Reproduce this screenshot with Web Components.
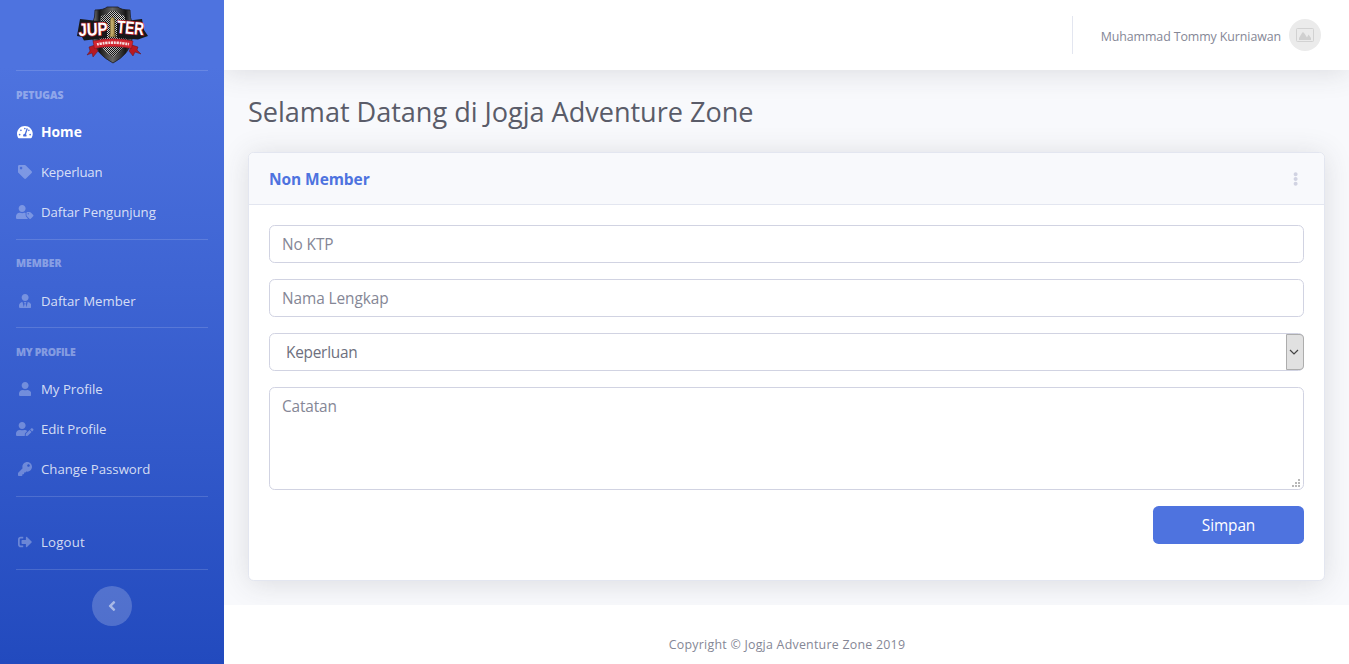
<!DOCTYPE html>
<html lang="id">
<head>
<meta charset="utf-8">
<title>Jogja Adventure Zone</title>
<style>
html,body{margin:0;height:100%}
body{font-family:"Open Sans","Noto Sans",sans-serif;color:#858796;font-size:15.4px;line-height:1.5;overflow:hidden}
</style>
</head>
<body>
<app-shell>
  <side-bar slot="side">
    <brand-logo></brand-logo>
    <nav-group heading="Petugas">
      <nav-item icon="gauge" active>Home</nav-item>
      <nav-item icon="tag" style="letter-spacing:-.2px">Keperluan</nav-item>
      <nav-item icon="usertag" style="letter-spacing:-.05px">Daftar Pengunjung</nav-item>
    </nav-group>
    <nav-group heading="Member">
      <nav-item icon="usertie">Daftar Member</nav-item>
    </nav-group>
    <nav-group heading="My Profile" style="--track:-.3px">
      <nav-item icon="user">My Profile</nav-item>
      <nav-item icon="useredit" style="letter-spacing:-.1px">Edit Profile</nav-item>
      <nav-item icon="key">Change Password</nav-item>
    </nav-group>
    <nav-group>
      <nav-item icon="signout" style="letter-spacing:.2px">Logout</nav-item>
    </nav-group>
    <side-toggle></side-toggle>
  </side-bar>
  <top-bar slot="top">Muhammad Tommy Kurniawan</top-bar>
  <page-title>Selamat Datang di Jogja Adventure Zone</page-title>
  <form-card>
    <span slot="title">Non Member</span>
    <text-field label="No KTP"></text-field>
    <text-field label="Nama Lengkap"></text-field>
    <select-field label="Keperluan"></select-field>
    <area-field label="Catatan"></area-field>
    <submit-button>Simpan</submit-button>
  </form-card>
  <page-footer slot="foot">Copyright © Jogja Adventure Zone 2019</page-footer>
</app-shell>
<script>
const define = (name, html) => customElements.define(name, class extends HTMLElement {
  constructor() {
    super();
    const markup = typeof html === 'function' ? html(this) : html;
    this.attachShadow({mode: 'open'}).innerHTML = '<style>*{box-sizing:border-box}:host{box-sizing:border-box}</style>' + markup;
  }
});

// [viewBox width, path]; every glyph is 512 units high
const icons = {
  gauge: [576, 'M288 32C128.94 32 0 160.94 0 320c0 52.8 14.25 102.26 39.06 144.8 5.61 9.62 16.3 15.2 27.44 15.2h443c11.14 0 21.83-5.58 27.44-15.2C561.75 422.26 576 372.8 576 320c0-159.06-128.94-288-288-288zm0 64c14.71 0 26.58 10.13 30.32 23.65-1.11 2.26-2.64 4.23-3.45 6.67l-9.22 27.67c-5.13 3.49-10.97 6.01-17.64 6.01-17.67 0-32-14.33-32-32S270.33 96 288 96zM96 384c-17.67 0-32-14.33-32-32s14.33-32 32-32 32 14.33 32 32-14.33 32-32 32zm48-160c-17.67 0-32-14.33-32-32s14.33-32 32-32 32 14.33 32 32-14.33 32-32 32zm246.77-72.41l-61.33 184C343.13 347.33 352 364.54 352 384c0 11.72-3.38 22.55-8.88 32H232.88c-5.5-9.45-8.88-20.28-8.88-32 0-33.94 26.5-61.43 59.9-63.59l61.34-184.01c4.17-12.56 17.73-19.45 30.36-15.17 12.57 4.19 19.35 17.79 15.17 30.36zm14.66 57.2l15.52-46.55c3.47-1.29 7.13-2.23 11.05-2.23 17.67 0 32 14.33 32 32s-14.33 32-32 32c-11.38-.01-20.89-6.28-26.57-15.22zM480 384c-17.67 0-32-14.33-32-32s14.33-32 32-32 32 14.33 32 32-14.33 32-32 32z'],
  tag: [512, 'M0 252.118V48C0 21.49 21.49 0 48 0h204.118a48 48 0 0 1 33.941 14.059l211.882 211.882c18.745 18.745 18.745 49.137 0 67.882L293.823 497.941c-18.745 18.745-49.137 18.745-67.882 0L14.059 286.059A48 48 0 0 1 0 252.118zM112 64c-26.51 0-48 21.49-48 48s21.49 48 48 48 48-21.49 48-48-21.49-48-48-48z'],
  usertag: [640, 'M630.6 364.9l-90.3-90.2c-12-12-28.3-18.7-45.3-18.7h-79.3c-17.7 0-32 14.3-32 32v79.2c0 17 6.7 33.2 18.7 45.2l90.3 90.2c12.5 12.5 32.8 12.5 45.3 0l92.5-92.5c12.6-12.5 12.6-32.7.1-45.2zm-182.8-21c-13.3 0-24-10.7-24-24s10.7-24 24-24 24 10.7 24 24c0 13.2-10.7 24-24 24zm-223.8-88c70.7 0 128-57.3 128-128C352 57.3 294.7 0 224 0S96 57.3 96 128c0 70.6 57.3 127.9 128 127.9zm127.8 111.2V294c-12.2-3.6-24.9-6.2-38.2-6.2h-16.7c-22.2 10.2-46.9 16-72.9 16s-50.6-5.8-72.9-16h-16.7C60.2 287.9 0 348.1 0 422.3v41.6c0 26.5 21.5 48 48 48h352c15.5 0 29.1-7.5 37.9-18.9l-58-58c-18.1-18.1-28.1-42.2-28.1-67.9z'],
  usertie: [448, 'M224 256c70.7 0 128-57.3 128-128S294.7 0 224 0 96 57.3 96 128s57.3 128 128 128zm95.8 32.6L272 480l-32-136 32-56h-96l32 56-32 136-47.8-191.4C56.9 292 0 350.3 0 422.4V464c0 26.5 21.5 48 48 48h352c26.5 0 48-21.5 48-48v-41.6c0-72.1-56.9-130.4-128.2-133.8z'],
  user: [448, 'M224 256c70.7 0 128-57.3 128-128S294.7 0 224 0 96 57.3 96 128s57.3 128 128 128zm89.6 32h-16.7c-22.2 10.2-46.9 16-72.9 16s-50.6-5.8-72.9-16h-16.7C60.2 288 0 348.2 0 422.4V464c0 26.5 21.5 48 48 48h352c26.5 0 48-21.5 48-48v-41.6c0-74.2-60.2-134.4-134.4-134.4z'],
  useredit: [640, 'M224 256c70.7 0 128-57.3 128-128S294.7 0 224 0 96 57.3 96 128s57.3 128 128 128zm89.6 32h-16.7c-22.2 10.2-46.9 16-72.9 16s-50.6-5.8-72.9-16h-16.7C60.2 288 0 348.2 0 422.4V464c0 26.5 21.5 48 48 48h274.9c-2.4-6.8-3.4-14-2.6-21.3l6.8-60.9 1.2-11.1 7.9-7.9 77.3-77.3c-24.5-27.7-60-45.5-99.9-45.5zm45.3 145.3l-6.8 61c-1.1 10.2 7.5 18.8 17.6 17.6l60.9-6.8 137.9-137.9-71.7-71.7-137.9 137.8zM633 268.9L595.1 231c-9.3-9.3-24.5-9.3-33.8 0l-37.8 37.8-4.1 4.1 71.8 71.7 41.8-41.8c9.3-9.4 9.3-24.5 0-33.9z'],
  key: [512, 'M512 176.001C512 273.203 433.202 352 336 352c-11.22 0-22.19-1.062-32.827-3.069l-24.012 27.014A23.999 23.999 0 0 1 261.223 384H224v40c0 13.255-10.745 24-24 24h-40v40c0 13.255-10.745 24-24 24H24c-13.255 0-24-10.745-24-24v-78.059c0-6.365 2.529-12.47 7.029-16.971l161.802-161.802C163.108 213.814 160 195.271 160 176 160 78.798 238.797.001 335.999 0 433.488-.001 512 78.511 512 176.001zM336 128c0 26.51 21.49 48 48 48s48-21.49 48-48-21.49-48-48-48-48 21.49-48 48z'],
  signout: [512, 'M497 273L329 441c-15 15-41 4.5-41-17v-96H152c-13.3 0-24-10.7-24-24v-96c0-13.3 10.7-24 24-24h136V88c0-21.4 25.9-32 41-17l168 168c9.3 9.4 9.3 24.6 0 34zM192 436v-40c0-6.6-5.4-12-12-12H96c-17.7 0-32-14.3-32-32V160c0-17.7 14.3-32 32-32h84c6.6 0 12-5.4 12-12V76c0-6.6-5.4-12-12-12H96c-53 0-96 43-96 96v192c0 53 43 96 96 96h84c6.6 0 12-5.4 12-12z'],
  left: [256, 'M31.7 239l136-136c9.4-9.4 24.6-9.4 33.9 0l22.6 22.6c9.4 9.4 9.4 24.6 0 33.9L127.9 256l96.4 96.4c9.4 9.4 9.4 24.6 0 33.9L201.7 409c-9.4 9.4-24.6 9.4-33.9 0l-136-136c-9.5-9.4-9.5-24.6-.1-34z'],
  dots: [192, 'M96 184c39.8 0 72 32.2 72 72s-32.2 72-72 72-72-32.2-72-72 32.2-72 72-72zM24 80c0 39.8 32.2 72 72 72s72-32.2 72-72S135.800 8 96 8 24 40.200 24 80zm0 352c0 39.800 32.200 72 72 72s72-32.200 72-72-32.200-72-72-72-72 32.200-72 72z']
};
const icon = (n, h) => `<svg viewBox="0 0 ${icons[n][0]} 512" width="${h * icons[n][0] / 512}" height="${h}" fill="currentColor"><path d="${icons[n][1]}"/></svg>`;

define('app-shell', `<style>
:host{display:flex;height:100%}
.main{flex:1;display:flex;flex-direction:column;background:#f8f9fc;min-width:0}
.body{flex:none;height:535px;padding:24px 24px 0;display:flex;flex-direction:column}
</style><slot name="side"></slot><div class="main"><slot name="top"></slot><div class="body"><slot></slot></div><slot name="foot"></slot></div>`);

define('side-bar', `<style>
:host{display:flex;flex-direction:column;width:224px;flex:none;position:relative;z-index:2;background:linear-gradient(180deg,#4e73df 10%,#224abe 100%)}
</style><slot></slot>`);

define('brand-logo', `<style>
:host{display:flex;justify-content:center;height:70px;padding-top:5px}
</style><svg width="90" height="60" viewBox="-8 0 90 60">
<defs>
<linearGradient id="rim" x1="0" x2="1"><stop offset="0" stop-color="#888"/><stop offset=".16" stop-color="#161616"/><stop offset=".5" stop-color="#666"/><stop offset=".84" stop-color="#161616"/><stop offset="1" stop-color="#666"/></linearGradient>
<linearGradient id="core" x1="0" x2="1" y1="0" y2="1"><stop offset="0" stop-color="#999"/><stop offset=".45" stop-color="#ddd"/><stop offset=".75" stop-color="#aaa"/><stop offset="1" stop-color="#333"/></linearGradient>
<linearGradient id="brass" x1="0" x2="1"><stop offset="0" stop-color="#6d5a2c"/><stop offset=".4" stop-color="#c7ad68"/><stop offset="1" stop-color="#54441f"/></linearGradient>
<pattern id="mesh" width="2" height="2" patternUnits="userSpaceOnUse"><path d="M0 0h1v1H0zM1 1h1v1H1z" fill="#111"/></pattern>
</defs>
<path d="M20 5Q29 5 32 2H43Q46 5 55 5Q55 14 57 17V34Q55 49 38 58Q21 49 18 35V17Q20 13 20 5Z" fill="url(#rim)" stroke="#1b1b22" stroke-width=".8"/>
<path d="M26 11Q32 10 35 6H41Q44 10 50 11Q49 16 52 19V34Q50 45 38 52Q26 45 24 34V19Q26 15 26 11Z" fill="url(#core)"/>
<path d="M26 11Q32 10 35 6H41Q44 10 50 11Q49 16 52 19V34Q50 45 38 52Q26 45 24 34V19Q26 15 26 11Z" fill="url(#mesh)"/>
<path d="M5 14L32 17V33L9 35.500L7 32L2 31Z" fill="#171719"/>
<path d="M42 17L67 14L69 25L73 31L63 34.500L42 33Z" fill="#171719"/>
<path d="M35 29V15Q35.500 12 37.500 12Q39.800 12 40 15V29L41.500 32H33.500Z" fill="url(#brass)" stroke="#30301e" stroke-width=".5"/>
<g font-family="Liberation Sans,sans-serif" font-weight="700" fill="#fff" stroke="#b3202c" stroke-width="1.400" paint-order="stroke">
<text font-size="18" x="3.500" y="30.500" textLength="29" lengthAdjust="spacingAndGlyphs" transform="rotate(-2 18 24)">JUP</text>
<text font-size="18" x="36" y="29" textLength="3.500" lengthAdjust="spacingAndGlyphs" fill="#c9b678" stroke="none" opacity=".5">I</text>
<text font-size="18" x="42" y="29" textLength="27" lengthAdjust="spacingAndGlyphs" transform="rotate(5 55 24)">TER</text></g>
<path d="M14 42L20 40L23 46L18 52L17 48L12 50L15 46ZM63 42L57 40L54 46L58 51L60 47L66 49L62 45Z" fill="#b71923" stroke="#5e1420" stroke-width=".5"/>
<path d="M18 36Q38 31.500 58 36L56.500 43.500Q38 39.500 19.500 43.500Z" fill="#d22630" stroke="#7e101d" stroke-width=".5"/>
<path d="M22 39.300Q38 36 54 39.300" fill="none" stroke="#f6dcdc" stroke-width="2.600" stroke-dasharray="1.800 .7 2.400 .8"/>
</svg>`);

define('nav-group', el => `<style>
:host{display:flex;flex-direction:column}
hr{width:192px;height:1px;border:0;margin:0 16px;background:rgba(255,255,255,.15)}
.h{height:41px;padding:${el.getAttribute('heading') === 'Member' ? 15 : 16}px 16px 0;font-size:10.4px;font-weight:800;line-height:16px;color:rgba(255,255,255,.4);text-transform:uppercase;letter-spacing:var(--track,0)}
.list{display:flex;flex-direction:column;padding-bottom:${el.getAttribute('heading') === 'Member' ? 6 : 7}px}
.gap{height:25px}
</style><hr>${el.hasAttribute('heading') ? `<div class="h">${el.getAttribute('heading')}</div>` : '<div class="gap"></div>'}<div class="list"><slot></slot></div>`);

define('nav-item', el => `<style>
:host{display:flex;align-items:center;gap:7px;height:40px;padding-left:16px;font-size:13.2px;line-height:20px;color:rgba(255,255,255,.8)}
:host([active]){font-weight:700;color:#fff;font-size:13.8px}
i{display:flex;justify-content:center;width:18px;color:rgba(255,255,255,.3)}
:host([active]) i{color:#fff}
svg{display:block;flex:none}
</style><i>${icon(el.getAttribute('icon'), 14)}</i><span><slot></slot></span>`);

define('side-toggle', `<style>
:host{display:flex;flex-direction:column;align-items:center}
hr{width:192px;height:1px;border:0;margin:0 0 16px;background:rgba(255,255,255,.15)}
button{width:40px;height:40px;border:0;border-radius:50%;background:rgba(255,255,255,.2);color:rgba(255,255,255,.5);display:flex;align-items:center;justify-content:center;padding:0 1px 0 0}
</style><hr><button aria-label="Toggle">${icon('left', 16)}</button>`);

define('top-bar', `<style>
:host{display:flex;align-items:center;justify-content:flex-end;flex:none;height:70px;padding-right:28px;background:#fff;box-shadow:0 2.4px 28px rgba(58,59,69,.15);position:relative;z-index:1}
.rule{width:1px;height:38px;background:#e3e6f0;margin-right:28px}
.name{font-size:12.4px;letter-spacing:-.09px;margin:4px 8px 0 0}
svg{display:block}
</style><div class="rule"></div><span class="name"><slot></slot></span>
<svg width="32" height="32" viewBox="0 0 32 32"><circle cx="16" cy="16" r="16" fill="#ebebeb"/><rect x="7.500" y="9.500" width="17" height="13" rx="1" fill="none" stroke="#d2d2d2"/><path d="M10 21V19L13 14L14 13L15.500 14.500L18 18.500L19.500 15.500L22 19V21Z" fill="#d0d0d0"/></svg>`);

define('page-title', `<style>
:host{display:block}
h1{margin:0 0 23px;padding-top:1px;font-weight:400;font-size:27.1px;letter-spacing:-.03px;line-height:34px;color:#5a5c69}
</style><h1><slot></slot></h1>`);

define('form-card', `<style>
:host{display:flex;flex-direction:column;height:429px;background:#fff;border:1px solid #e3e6f0;border-radius:5.6px;box-shadow:0 2.4px 28px rgba(58,59,69,.15)}
header{display:flex;align-items:center;justify-content:space-between;height:52px;padding:0 26px 0 20px;background:#f8f9fc;border-bottom:1px solid #e3e6f0;border-radius:5px 5px 0 0;flex:none;color:#4e73df;font-weight:700;font-size:15.5px;letter-spacing:-.08px}
header div{padding-top:2px}
header svg{color:#d1d3e2}
.body{display:flex;flex-direction:column;gap:16px;padding:20px}
</style><header><div><slot name="title"></slot></div>${icon('dots', 14)}</header><div class="body"><slot></slot></div>`);

const box = `:host{display:flex}
.c{flex:1;width:100%;height:38px;padding:1px 12px 0;border:1px solid #d1d3e2;border-radius:5.6px;background:#fff;font:inherit;letter-spacing:-.08px;color:#6e707e;outline:0;margin:0}
.c::placeholder{color:#858796;opacity:1}`;

define('text-field', el => `<style>${box}</style><input class="c" placeholder="${el.getAttribute('label')}">`);

define('select-field', el => `<style>${box}
:host{position:relative}
.c{appearance:none;padding-left:16px;letter-spacing:-.25px}
.arrow{position:absolute;right:0;top:0;width:18px;height:38px;pointer-events:none}
</style><select class="c"><option>${el.getAttribute('label')}</option></select>
<svg class="arrow" viewBox="0 0 18 38"><path d="M.5 1.500H14Q17.500 1.500 17.500 5V33Q17.500 36.500 14 36.500H.5Z" fill="#e1e1e1" stroke="#adadad"/><path d="M4 17L8 21L12 17" fill="none" stroke="#444" stroke-width="1.200"/></svg>`);

define('area-field', el => `<style>${box}
:host{position:relative}
.c{height:103px;padding-top:7px;resize:none;letter-spacing:-.15px}
.grip{position:absolute;right:4px;bottom:3px;width:8px;height:8px}
</style><textarea class="c" placeholder="${el.getAttribute('label')}"></textarea>
<svg class="grip" viewBox="0 0 8 8" fill="#b8b8b8"><path d="M6 0h2v2H6zM3 3h2v2H3zM6 3h2v2H6zM0 6h2v2H0zM3 6h2v2H3zM6 6h2v2H6z"/></svg>`);

define('submit-button', `<style>
:host{display:flex;justify-content:flex-end}
button{width:151px;height:38px;border:0;border-radius:5.6px;background:#4e73df;color:#fff;font:inherit;letter-spacing:-.1px;padding:2px 0 0}
</style><button><slot></slot></button>`);

define('page-footer', `<style>
:host{display:flex;flex:1;align-items:flex-start;justify-content:center;background:#fff;padding:31px 0 0 1px;font-size:12.4px;line-height:18px;letter-spacing:.24px;position:relative}
</style><slot></slot>`);
</script>
</body>
</html>
